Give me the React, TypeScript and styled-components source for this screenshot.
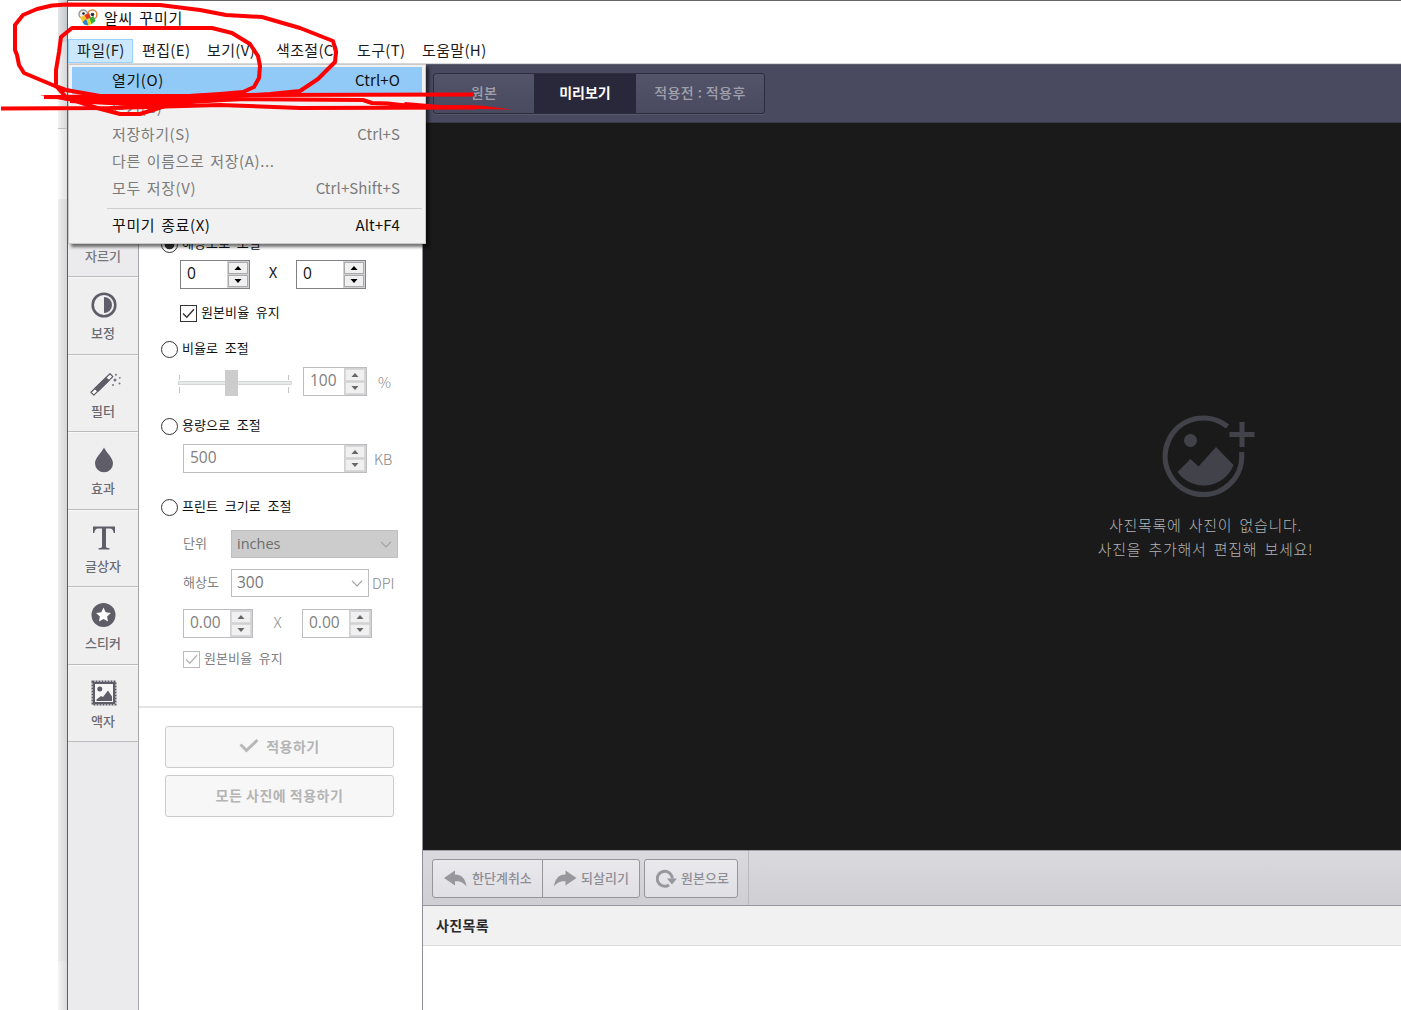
import React from 'react';
import styled, { createGlobalStyle, css } from 'styled-components';

const GlobalStyle = createGlobalStyle`
  * { box-sizing: border-box; }
  body { margin: 0; background: #fff; overflow: hidden; }
  body, button, input { font-family: "Noto Sans CJK KR", "Noto Sans", sans-serif; }
`;

const Screen = styled.div`
  position: relative;
  display: flex;
  width: 1401px;
  height: 1010px;
  overflow: hidden;
  background: #fff;
  line-height: 1;
  white-space: nowrap;
`;

/* Strip of the window lying behind the editor */
const Backdrop = styled.div`
  display: flex;
  flex-direction: column;
  width: 67px;
  padding-left: 58px;
`;
const BackdropPiece = styled.div<{ $h: number; $from: string; $to: string; $line?: boolean }>`
  height: ${p => p.$h}px;
  flex: none;
  background: linear-gradient(90deg, ${p => p.$from}, ${p => p.$to});
  border-bottom: ${p => (p.$line ? '1px solid #bfc0c6' : '0')};
`;

const Window = styled.main`
  display: flex;
  flex-direction: column;
  flex: 1;
  min-width: 0;
  border-top: 1px solid #666468;
  border-left: 1px solid #5e5e60;
`;
const TitleBar = styled.header`
  display: flex;
  align-items: center;
  gap: 6px;
  height: 38px;
  padding: 0 0 5px 10px;
  font-size: 15px;
  letter-spacing: 0.8px;
  word-spacing: 2px;
  color: #111;
`;
const MenuBar = styled.nav`
  position: relative;
  display: flex;
  height: 25px;
  border-bottom: 1px solid #d8d8dc;
`;
const MenuTab = styled.div<{ $w: number; $open?: boolean }>`
  display: flex;
  align-items: center;
  width: ${p => p.$w}px;
  height: 24px;
  padding: 0 0 3px ${p => (p.$open ? 8 : 9)}px;
  font-size: 15px;
  letter-spacing: 0.35px;
  color: #1c1c1c;
  ${p => p.$open && css`background: #cce8ff; border: 1px solid #99d1ff;`}
`;

const Dropdown = styled.div`
  position: absolute;
  z-index: 5;
  left: 0;
  top: 25px;
  display: flex;
  flex-direction: column;
  width: 358px;
  height: 180px;
  padding: 2px 3px 3px;
  background: #f1f1f1;
  border: 1px solid #c9c9c9;
  box-shadow: 3px 3px 3px rgba(0, 0, 0, 0.55);
`;
const Command = styled.div<{ $active?: boolean; $off?: boolean }>`
  display: flex;
  align-items: center;
  justify-content: space-between;
  height: 27.4px;
  padding: 0 22px 3px 40px;
  font-size: 15px;
  letter-spacing: 0.6px;
  word-spacing: 2px;
  color: ${p => (p.$off ? '#7b7b7b' : '#111')};
  background: ${p => (p.$active ? '#91c9f7' : 'transparent')};
`;
const Shortcut = styled.span`
  letter-spacing: 0.1px;
`;
const Rule = styled.hr`
  width: 315px;
  height: 1px;
  margin: 5px 0 4px 35px;
  border: 0;
  background: #cfcfcf;
`;

const ModeBar = styled.div`
  display: flex;
  height: 59px;
  flex: none;
  padding: 8px 0 0 365px;
  background: #494a5f;
  border-top: 1px solid #5b5c6c;
  border-bottom: 1px solid #3a3b4a;
`;
const Modes = styled.div`
  display: flex;
  width: 332px;
  height: 41px;
  border: 1px solid #2c2d3e;
  border-radius: 3px;
  background: linear-gradient(#53546a, #494a60);
  box-shadow: 0 1px 0 #55566a;
`;
const Mode = styled.button<{ $w: number; $on?: boolean }>`
  width: ${p => p.$w}px;
  padding: 0 0 4px;
  border: 0;
  font-size: 14px;
  font-weight: ${p => (p.$on ? 700 : 500)};
  letter-spacing: ${p => (p.$on ? 0 : 0.4)}px;
  color: ${p => (p.$on ? '#fff' : '#a0a1ad')};
  background: ${p => (p.$on ? '#28283a' : 'transparent')};
`;

const Body = styled.div`
  display: flex;
  flex: 1;
  min-height: 0;
`;
const ToolRail = styled.aside`
  display: flex;
  flex-direction: column;
  width: 71px;
  background: #ebebed;
  border-right: 1px solid #a7a7aa;
`;
const Tool = styled.div`
  display: flex;
  flex-direction: column;
  align-items: center;
  height: 77.5px;
  flex: none;
  padding-top: 10px;
  border-top: 1px solid #f8f8f8;
  border-bottom: 1px solid #bcbcbf;
  background: #efeff0;
  font-size: 13px;
  font-weight: 500;
  color: #6b6a70;
  svg { margin: 0 0 4px 2px; flex: none; }
`;
const FirstTools = styled.div`
  height: 126px;
  flex: none;
`;
const CropTool = styled.div`
  height: 28px;
  flex: none;
  border-bottom: 1px solid #bcbcbf;
  font-size: 13px;
  font-weight: 500;
  color: #77767b;
  text-align: center;
`;

const Settings = styled.section`
  display: flex;
  flex-direction: column;
  width: 284px;
  background: #fff;
  border-right: 1px solid #8f8f98;
`;
const Options = styled.div`
  display: flex;
  flex-direction: column;
  height: 585px;
  flex: none;
  padding: 112px 0 0 22px;
  border-bottom: 2px solid #e3e3e5;
`;
const Line = styled.div<{ $h: number; $top?: number; $indent?: number }>`
  display: flex;
  align-items: center;
  flex: none;
  height: ${p => p.$h}px;
  margin-top: ${p => p.$top || 0}px;
  padding-left: ${p => p.$indent || 0}px;
`;
const Caption = styled.span<{ $off?: boolean; $w?: number }>`
  width: ${p => (p.$w ? p.$w + 'px' : 'auto')};
  padding-bottom: ${p => (p.$w ? 4 : 3)}px;
  font-size: 13px;
  letter-spacing: 0.1px;
  word-spacing: 3.5px;
  color: ${p => (p.$off ? '#808080' : '#111')};
`;
const Radio = styled.span<{ $on?: boolean }>`
  width: 17px;
  height: 17px;
  margin-right: 4px;
  border: 1.5px solid #333;
  border-radius: 50%;
  background: ${p => (p.$on ? 'radial-gradient(#333 0 4.5px, #fff 5.2px)' : '#fff')};
`;
const Check = styled.span<{ $off?: boolean }>`
  display: flex;
  align-items: center;
  justify-content: center;
  width: 17px;
  height: 17px;
  margin-right: 4px;
  border: 1px solid ${p => (p.$off ? '#bcbcbc' : '#333')};
  color: ${p => (p.$off ? '#b5b5b5' : '#333')};
`;
const Field = styled.div<{ $w: number; $off?: boolean }>`
  display: flex;
  width: ${p => p.$w}px;
  height: 29px;
  flex: none;
  border: 1px solid ${p => (p.$off ? '#bdbdc0' : '#808084')};
  background: #fff;
  color: ${p => (p.$off ? '#808080' : '#111')};
`;
const Value = styled.span`
  flex: 1;
  padding: 5px 0 0 6px;
  font-family: "Open Sans", sans-serif;
  font-size: 15.5px;
`;
const Stepper = styled.span`
  display: flex;
  flex-direction: column;
  gap: 1px;
  width: 22px;
  padding: 1px;
  background: #d2d2d6;
`;
const Step = styled.span<{ $off?: boolean }>`
  display: flex;
  align-items: center;
  justify-content: center;
  flex: 1;
  background: #f0f0f0;
  border: 1px solid ${p => (p.$off ? '#d8d8d8' : '#aaa')};
  color: ${p => (p.$off ? '#666' : '#000')};
`;
const Times = styled.span<{ $w: number; $off?: boolean }>`
  width: ${p => p.$w}px;
  padding-bottom: ${p => (p.$off ? 5 : 7)}px;
  text-align: center;
  font-size: 15px;
  font-weight: ${p => (p.$off ? 300 : 400)};
  color: ${p => (p.$off ? '#888' : '#222')};
`;
const Unit = styled.span<{ $gap: number }>`
  padding: 1px 0 0 ${p => p.$gap}px;
  font-size: 14.5px;
  font-weight: 300;
  color: #888;
`;
const Select = styled.div<{ $w: number; $filled?: boolean }>`
  display: flex;
  align-items: center;
  justify-content: space-between;
  width: ${p => p.$w}px;
  height: 28px;
  padding: 0 5px;
  border: 1px solid ${p => (p.$filled ? '#bfbfbf' : '#bdbdbd')};
  background: ${p => (p.$filled ? '#cccccc' : '#fff')};
  font-family: "Open Sans", sans-serif;
  font-size: ${p => (p.$filled ? 14.5 : 15.5)}px;
  color: ${p => (p.$filled ? '#6d6d6d' : '#777')};
`;
const SliderBox = styled.div`
  display: flex;
  width: 125px;
  height: 28px;
`;
const Actions = styled.div`
  display: flex;
  flex-direction: column;
  gap: 7px;
  padding: 18px 0 0 26px;
`;
const ActionButton = styled.button`
  display: flex;
  align-items: center;
  justify-content: center;
  gap: 7px;
  width: 229px;
  height: 42px;
  padding: 0 0 3px;
  border: 1px solid #cbcbcb;
  border-radius: 3px;
  background: #f7f7f7;
  font-size: 14px;
  font-weight: 700;
  letter-spacing: 0.5px;
  color: #b4b4b4;
`;

const Stage = styled.section`
  display: flex;
  flex-direction: column;
  flex: 1;
  min-width: 0;
`;
const Canvas = styled.div`
  display: flex;
  flex-direction: column;
  align-items: center;
  height: 727px;
  flex: none;
  padding: 290px 0 0 587px;
  background: #1a1a1a;
`;
const EmptyText = styled.p`
  margin: 0;
  height: 24px;
  font-size: 15px;
  font-weight: 300;
  letter-spacing: 0.75px;
  word-spacing: 3px;
  color: #b4b4b6;
`;
const EmptyIcon = styled.div`
  height: 104px;
  padding-left: 6px;
`;
const HistoryBar = styled.div`
  display: flex;
  gap: 4px;
  height: 56px;
  flex: none;
  padding: 8px 0 0 9px;
  background: linear-gradient(#dadade, #cfced3);
  border-top: 1px solid #a2a1a8;
  border-bottom: 1px solid #98979e;
`;
const HistoryGroup = styled.div`
  display: flex;
  height: 39px;
  border: 1px solid #96959c;
  border-radius: 3px;
  background: linear-gradient(#e9e9ec, #e0dfe4);
`;
const HistoryButton = styled.button<{ $w: number; $gap: number }>`
  display: flex;
  align-items: center;
  gap: ${p => p.$gap}px;
  width: ${p => p.$w}px;
  padding: 0 0 2px 11px;
  border: 0;
  background: none;
  font-size: 13px;
  font-weight: 500;
  color: #8e8d95;
  & + & { border-left: 1px solid #96959c; }
  svg { margin-top: 2px; flex: none; }
`;
const HistoryEnd = styled.span`
  width: 1px;
  height: 54px;
  margin: -8px 0 0 6px;
  background: #bab9bf;
`;
const ListHeader = styled.h2`
  display: flex;
  align-items: center;
  height: 40px;
  flex: none;
  margin: 0;
  padding: 0 0 1px 13px;
  background: #f1f1f1;
  border-bottom: 1px solid #dcdcdc;
  font-size: 14px;
  font-weight: 700;
  letter-spacing: 0.4px;
  color: #29292c;
`;

const Markup = styled.svg`
  position: absolute;
  z-index: 10;
  inset: 0;
  pointer-events: none;
`;

const Arrow = ({ down }: { down?: boolean }) => (
  <svg width="8" height="4" viewBox="0 0 8 4"><path d={down ? 'M0.5 0h7L4 4z' : 'M0.5 4h7L4 0z'} fill="currentColor" /></svg>
);
const Spin = ({ w, value, off }: { w: number; value: string; off?: boolean }) => (
  <Field $w={w} $off={off}>
    <Value>{value}</Value>
    <Stepper>
      <Step $off={off}><Arrow /></Step>
      <Step $off={off}><Arrow down /></Step>
    </Stepper>
  </Field>
);
const Tick = () => (
  <svg width="13" height="11" viewBox="0 0 13 11"><path d="M1 5.5 4.8 9.3 12 1.2" fill="none" stroke="currentColor" strokeWidth="1.4" /></svg>
);
const Chevron = () => (
  <svg width="12" height="7" viewBox="0 0 12 7"><path d="M1 .8 6 5.8 11 .8" fill="none" stroke="#a2a2a2" strokeWidth="1.2" /></svg>
);

const AppLogo = () => (
  <svg width="20" height="18" viewBox="0 0 20 18">
    <circle cx="5.3" cy="5.3" r="4.3" fill="#eee" stroke="#999" strokeWidth="1.4" />
    <circle cx="14.3" cy="5.5" r="4.6" fill="#fff" stroke="#e78038" strokeWidth="1.5" />
    <circle cx="5.5" cy="4.5" r="1.3" fill="#222" /><circle cx="14.5" cy="5.5" r="1.8" fill="#333" />
    <path d="M2 8.500 6.500 6 9 11 5.500 14.500z" fill="#f6c52e" />
    <path d="M6.500 6 11 4 13 9 9 11z" fill="#e53620" />
    <path d="M11 9.500 15.500 7 17.500 12 13 15.500z" fill="#31ad43" />
    <path d="M4.500 13 8 10l3 4-1 2.500-4-1z" fill="#2788d0" />
    <path d="M8.500 10.500 11.500 9 13.500 14.500 10.500 17z" fill="#e6dc2a" />
  </svg>
);

const ContrastIcon = () => (
  <svg width="26" height="34" viewBox="0 0 26 34">
    <circle cx="13" cy="17" r="11.3" fill="none" stroke="#5f5e68" strokeWidth="2.6" />
    <path d="M13 9a8 8 0 0 1 0 16z" fill="#5f5e68" />
  </svg>
);
const WandIcon = () => (
  <svg width="34" height="34" viewBox="0 0 34 34">
    <path d="m4 26.300 19-18.500 2.800 2.800L6.800 29.100z" fill="#fff" stroke="#5f5e68" strokeWidth="1.3" strokeLinejoin="round" />
    <path d="m8 22.500 11-10.700 2.800 2.800-11 10.700z" fill="#5f5e68" stroke="#5f5e68" strokeWidth="1.3" />
    <g fill="#77767e"><circle cx="29" cy="8.800" r="1" /><circle cx="28" cy="14" r="1.5" /><circle cx="32.800" cy="11.800" r=".9" /><circle cx="32.500" cy="17.500" r="1" /><circle cx="26" cy="19" r="1" /></g>
  </svg>
);
const DropIcon = () => (
  <svg width="26" height="34" viewBox="0 0 26 34"><path d="M13 4.500C15.500 10 22 14.600 22 20.500a9 8.800 0 0 1-18 0C4 14.600 10.500 10 13 4.500z" fill="#5f5e68" /></svg>
);
const TextIcon = () => (
  <svg width="26" height="34" viewBox="0 0 26 34"><path d="M2 5.500H24V12H22.700Q22.200 7.500 19 7.500H15V25.500Q15 27 18.500 27.300V28.500H7.500V27.300Q11 27 11 25.500V7.500H7Q3.800 7.500 3.300 12H2z" fill="#5f5e68" /></svg>
);
const StarIcon = () => (
  <svg width="26" height="34" viewBox="0 0 26 34">
    <circle cx="12.500" cy="17" r="12" fill="#5f5e68" />
    <path d="m12.500 9.500 2.200 4.700 5.200.700-3.800 3.600.9 5.100-4.500-2.500-4.500 2.500.9-5.100-3.800-3.600 5.200-.7z" fill="#fff" />
  </svg>
);
const FrameIcon = () => (
  <svg width="26" height="34" viewBox="0 0 26 34">
    <rect x="1.500" y="5.500" width="23" height="23" fill="none" stroke="#5f5e68" strokeWidth="2" strokeDasharray="2 1" />
    <rect x="3" y="7" width="20" height="20" fill="#f6f6f6" stroke="#5f5e68" strokeWidth="2" />
    <circle cx="8.800" cy="13" r="2.500" fill="#5f5e68" />
    <path d="M5.500 25v-1.500L10 20l2 1 5-6.500 4 6V25z" fill="#5f5e68" />
  </svg>
);
const UndoIcon = () => (
  <svg width="23" height="17" viewBox="0 0 23 17"><path d="M0 8 11 .5V4.500C18 4.500 21.500 9 22.500 16.500 19.500 12.500 16.500 11 11 11.200V15.500z" fill="#98979e" /></svg>
);
const RedoIcon = () => (
  <svg width="23" height="17" viewBox="0 0 23 17"><path d="M22.500 8 11.500 .5V4.500C4.500 4.500 1 9 0 16.500 3 12.500 6 11 11.500 11.200V15.500z" fill="#98979e" /></svg>
);
const ResetIcon = () => (
  <svg width="21" height="19" viewBox="0 0 21 19">
    <path d="M13 16A7.500 7.500 0 1 1 16.300 9.500" fill="none" stroke="#98979e" strokeWidth="2.900" />
    <path d="M11 9.500H21L16 15.500z" fill="#98979e" />
  </svg>
);

const tools = [
  { name: '보정', Icon: ContrastIcon },
  { name: '필터', Icon: WandIcon },
  { name: '효과', Icon: DropIcon },
  { name: '글상자', Icon: TextIcon },
  { name: '스티커', Icon: StarIcon },
  { name: '액자', Icon: FrameIcon },
];

export default function App() {
  return (
    <>
      <GlobalStyle />
      <Screen>
        <Backdrop>
          <BackdropPiece $h={42} $from="#e2e4e8" $to="#c5c8cc" />
          <BackdropPiece $h={87} $from="#f2f2f3" $to="#d6d6d8" $line />
          <BackdropPiece $h={70} $from="#fafafa" $to="#e0e0e0" />
          <BackdropPiece $h={762} $from="#eeeeee" $to="#d6d6d6" />
          <BackdropPiece $h={49} $from="#f5f5f5" $to="#dadada" />
        </Backdrop>
        <Window>
          <TitleBar><AppLogo />알씨 꾸미기</TitleBar>
          <MenuBar>
            <MenuTab $w={65} $open>파일(F)</MenuTab>
            <MenuTab $w={65}>편집(E)</MenuTab>
            <MenuTab $w={69}>보기(V)</MenuTab>
            <MenuTab $w={81}>색조절(C)</MenuTab>
            <MenuTab $w={65}>도구(T)</MenuTab>
            <MenuTab $w={85}>도움말(H)</MenuTab>
            <Dropdown>
              <Command $active>열기(O)<Shortcut>Ctrl+O</Shortcut></Command>
              <Command $off>닫기(C)</Command>
              <Command $off>저장하기(S)<Shortcut>Ctrl+S</Shortcut></Command>
              <Command $off>다른 이름으로 저장(A)...</Command>
              <Command $off>모두 저장(V)<Shortcut>Ctrl+Shift+S</Shortcut></Command>
              <Rule />
              <Command>꾸미기 종료(X)<Shortcut>Alt+F4</Shortcut></Command>
            </Dropdown>
          </MenuBar>
          <ModeBar>
            <Modes>
              <Mode $w={100}>원본</Mode>
              <Mode $w={102} $on>미리보기</Mode>
              <Mode $w={128}>적용전 : 적용후</Mode>
            </Modes>
          </ModeBar>
          <Body>
            <ToolRail>
              <FirstTools />
              <CropTool>자르기</CropTool>
              {tools.map(({ name, Icon }) => <Tool key={name}><Icon />{name}</Tool>)}
            </ToolRail>
            <Settings>
              <Options>
                <Line $h={18}><Radio $on /><Caption>해상도로 조절</Caption></Line>
                <Line $h={29} $top={7} $indent={19}>
                  <Spin w={70} value="0" /><Times $w={46}>X</Times><Spin w={70} value="0" />
                </Line>
                <Line $h={18} $top={15} $indent={19}><Check><Tick /></Check><Caption>원본비율 유지</Caption></Line>
                <Line $h={18} $top={18}><Radio /><Caption>비율로 조절</Caption></Line>
                <Line $h={29} $top={9} $indent={17}>
                  <SliderBox>
                    <svg width="116" height="28" viewBox="0 0 116 28">
                      <rect x=".5" y="13.500" width="113" height="3" fill="#e7eaea" stroke="#d6d6d6" />
                      <path d="M1.500 7v5M1.500 19v6M110.500 7v5M110.500 19v6" stroke="#c4c4c4" />
                      <rect x="47" y="2" width="13" height="26" fill="#cccccc" />
                    </svg>
                  </SliderBox>
                  <Spin w={64} value="100" off /><Unit $gap={11}>%</Unit>
                </Line>
                <Line $h={18} $top={21}><Radio /><Caption>용량으로 조절</Caption></Line>
                <Line $h={29} $top={9} $indent={22}><Spin w={184} value="500" off /><Unit $gap={7}>KB</Unit></Line>
                <Line $h={18} $top={25}><Radio /><Caption>프린트 크기로 조절</Caption></Line>
                <Line $h={28} $top={14} $indent={22}><Caption $off $w={48}>단위</Caption><Select $w={167} $filled>inches<Chevron /></Select></Line>
                <Line $h={28} $top={11} $indent={22}><Caption $off $w={48}>해상도</Caption><Select $w={138}>300<Chevron /></Select><Unit $gap={3}>DPI</Unit></Line>
                <Line $h={29} $top={12} $indent={22}>
                  <Spin w={70} value="0.00" off /><Times $w={49} $off>X</Times><Spin w={70} value="0.00" off />
                </Line>
                <Line $h={18} $top={12} $indent={22}><Check $off><Tick /></Check><Caption $off>원본비율 유지</Caption></Line>
              </Options>
              <Actions>
                <ActionButton>
                  <svg width="20" height="15" viewBox="0 0 20 15"><path d="m1.500 6.500 6 6L18.500 2" fill="none" stroke="#b8b8b8" strokeWidth="3" /></svg>
                  적용하기
                </ActionButton>
                <ActionButton>모든 사진에 적용하기</ActionButton>
              </Actions>
            </Settings>
            <Stage>
              <Canvas>
                <EmptyIcon>
                  <svg width="94" height="84" viewBox="0 0 94 84">
                    <path d="M65.500 13.500A38.300 38.300 0 1 0 79.500 39" fill="none" stroke="#42424a" strokeWidth="5.200" />
                    <path d="M80 9v25M67.500 21.500h25" stroke="#42424a" strokeWidth="5" />
                    <circle cx="28.500" cy="27.500" r="6.500" fill="#42424a" />
                    <path d="M15.500 59 28.500 46 36.500 53.500 54 34 71.500 52A32 32 0 0 1 15.500 59z" fill="#42424a" />
                  </svg>
                </EmptyIcon>
                <EmptyText>사진목록에 사진이 없습니다.</EmptyText>
                <EmptyText>사진을 추가해서 편집해 보세요!</EmptyText>
              </Canvas>
              <HistoryBar>
                <HistoryGroup>
                  <HistoryButton $w={109} $gap={5}><UndoIcon />한단계취소</HistoryButton>
                  <HistoryButton $w={97} $gap={4}><RedoIcon />되살리기</HistoryButton>
                </HistoryGroup>
                <HistoryGroup>
                  <HistoryButton $w={92} $gap={4}><ResetIcon />원본으로</HistoryButton>
                </HistoryGroup>
                <HistoryEnd />
              </HistoryBar>
              <ListHeader>사진목록</ListHeader>
            </Stage>
          </Body>
        </Window>
        <Markup width="1401" height="1010" viewBox="0 0 1401 1010" fill="none" stroke="#fe0000" strokeWidth="4" strokeLinejoin="round">
          <path d="M66 90 55 86 24 73 19 65 17 55 15 50V25L23 15 37 9 52 5.500 67 4.500 160 5 200 10 226 15 262 17 300 28 333 41 336 52 335 62 318 79 300 91 270 94 220 97 165 106 140 114H120L97 108 67 98 56 86V70L59 52 61 37 72 28H212L232 33 250 44 258 56 260 66 259 78 254 87 243 92 220 94 190 96 100 96 66 90" />
          <path d="M44 97 130 98 220 95 474 94.500M1 108.500 110 108 220 105 300 108 475 107.500M70 101 130 104 220 99 363 100 372 103 388 103.500 410 106" />
          <path d="M40 95.500 105 94 180 95 240 98 240 101 140 107 67 101zM405 102 440 105 480 105.500 513 109.500 475 109 400 108z" fill="#fe0000" stroke="none" />
        </Markup>
      </Screen>
    </>
  );
}
